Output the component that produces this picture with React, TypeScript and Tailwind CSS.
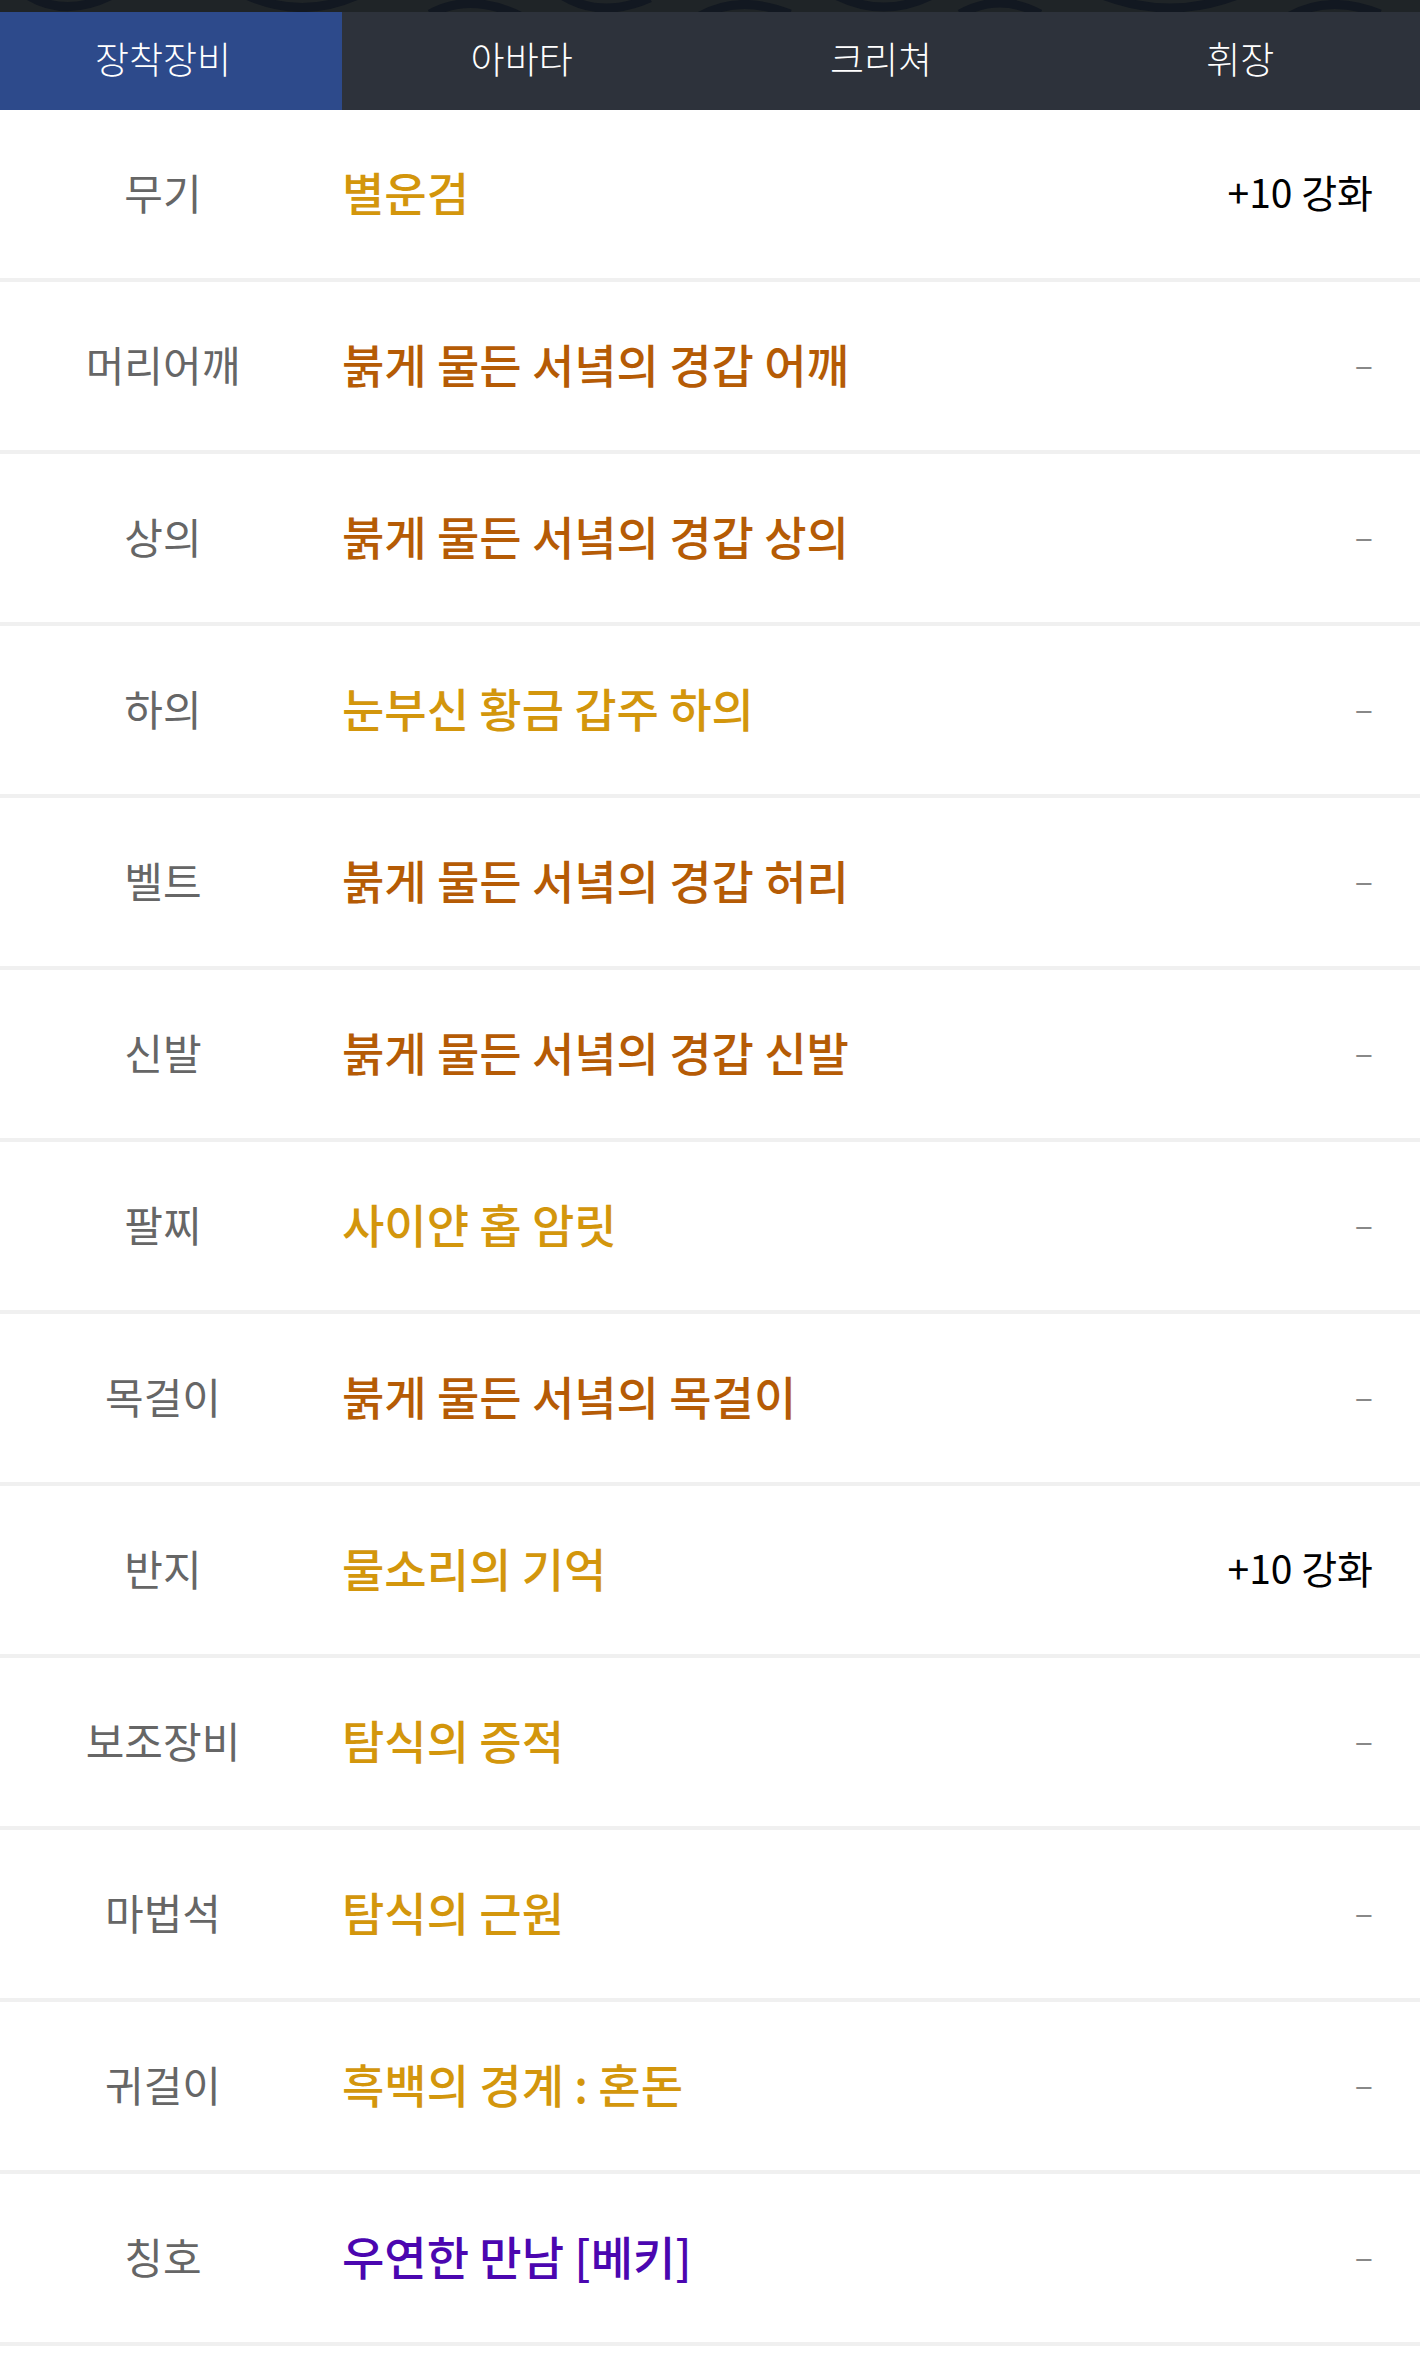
import React from 'react';

type Item = {
  slot: string;
  name: string;
  color: string;
  extra?: string;
};

const items: Item[] = [
  { slot: '무기', name: '별운검', color: 'text-[#d3960c]', extra: '+10 강화' },
  { slot: '머리어깨', name: '붉게 물든 서녘의 경갑 어깨', color: 'text-[#b55b05]' },
  { slot: '상의', name: '붉게 물든 서녘의 경갑 상의', color: 'text-[#b55b05]' },
  { slot: '하의', name: '눈부신 황금 갑주 하의', color: 'text-[#d3960c]' },
  { slot: '벨트', name: '붉게 물든 서녘의 경갑 허리', color: 'text-[#b55b05]' },
  { slot: '신발', name: '붉게 물든 서녘의 경갑 신발', color: 'text-[#b55b05]' },
  { slot: '팔찌', name: '사이얀 홉 암릿', color: 'text-[#d3960c]' },
  { slot: '목걸이', name: '붉게 물든 서녘의 목걸이', color: 'text-[#b55b05]' },
  { slot: '반지', name: '물소리의 기억', color: 'text-[#d3960c]', extra: '+10 강화' },
  { slot: '보조장비', name: '탐식의 증적', color: 'text-[#d3960c]' },
  { slot: '마법석', name: '탐식의 근원', color: 'text-[#d3960c]' },
  { slot: '귀걸이', name: '흑백의 경계 : 혼돈', color: 'text-[#d3960c]' },
  { slot: '칭호', name: '우연한 만남 [베키]', color: 'text-[#4b06b0]' },
];

const tabs = ['장착장비', '아바타', '크리쳐', '휘장'];

function TopBand() {
  return (
    <div className="h-[12px] bg-[#1f2427] overflow-hidden">
      <svg width="1420" height="12" viewBox="0 0 1420 12" fill="none">
        <g stroke="#121821" strokeWidth="9">
          <path d="M20 -10 Q60 20 110 -4" />
          <path d="M240 -8 Q300 22 360 -6" />
          <path d="M430 14 Q470 -8 520 16" />
          <path d="M560 -6 Q600 20 650 -2" />
          <path d="M700 16 Q740 -6 790 14" />
          <path d="M830 -8 Q880 20 930 -4" />
          <path d="M960 14 Q1000 -8 1040 14" />
          <path d="M1100 -6 Q1170 22 1240 -6" />
          <path d="M1290 16 Q1330 -6 1380 14" />
        </g>
      </svg>
    </div>
  );
}

export default function App() {
  return (
    <div
      className="w-[1420px] min-h-[2360px] bg-white"
      style={{ fontFamily: '"Noto Sans CJK KR", "Noto Sans", sans-serif' }}
    >
      <TopBand />

      {/* tab bar */}
      <div className="flex h-[98px] bg-[#2d323b]">
        {tabs.map((t, i) => (
          <div
            key={t}
            className={`flex items-center justify-center pb-[5px] text-[37px] text-white font-light ${
              i === 0 ? 'w-[342px] bg-[#2d4a8b] pr-[16px]' : 'flex-1'
            }`}
          >
            {t}
          </div>
        ))}
      </div>

      {/* equipment list */}
      <div className="flex flex-col">
        {items.map((it) => (
          <div
            key={it.slot}
            className="flex items-center h-[172px] border-b-4 border-[#f0f0f0] pr-[47px] pb-[5px]"
          >
            <div className="w-[342px] pr-[16px] text-center text-[42px] text-[#666666]">
              {it.slot}
            </div>
            <div className={`flex-1 text-[46px] font-medium ${it.color}`}>{it.name}</div>
            {it.extra ? (
              <div className="text-[39px] text-black">{it.extra}</div>
            ) : (
              <div className="text-[34px] text-[#888888]">–</div>
            )}
          </div>
        ))}
      </div>
    </div>
  );
}
